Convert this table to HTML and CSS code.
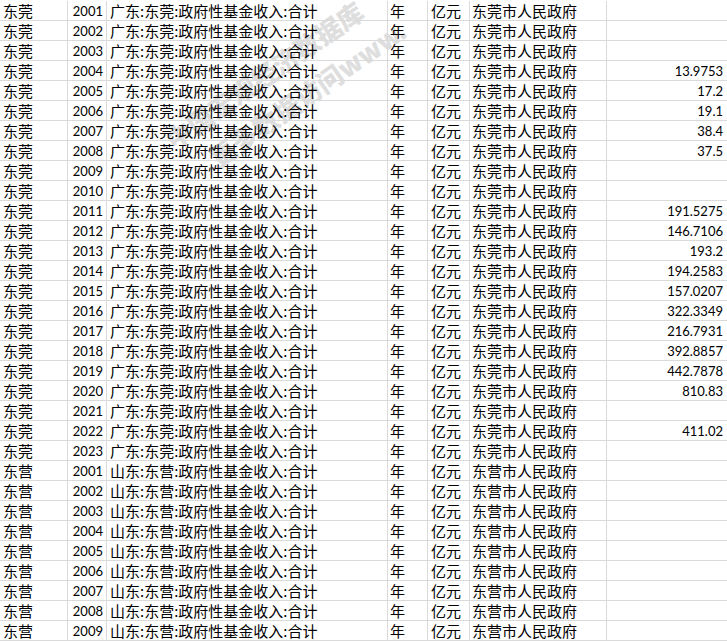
FILE: index.html
```html
<!DOCTYPE html>
<html lang="zh-CN">
<head>
<meta charset="utf-8">
<title>政府性基金收入</title>
<link rel="stylesheet" href="styles.css">
</head>
<body>
<div class="sheet">
  <div class="watermark">
    <div class="wm wm1">中国宏观经济数据库</div>
    <div class="wm wm2">更多数据访问www.</div>
  </div>
  <div class="grid">
    <div class="row"><span class="c city">东莞</span><span class="c yr">2001</span><span class="c nm">广东:东莞:政府性基金收入:合计</span><span class="c u">年</span><span class="c u2">亿元</span><span class="c src">东莞市人民政府</span><span class="c val"></span></div>
    <div class="row"><span class="c city">东莞</span><span class="c yr">2002</span><span class="c nm">广东:东莞:政府性基金收入:合计</span><span class="c u">年</span><span class="c u2">亿元</span><span class="c src">东莞市人民政府</span><span class="c val"></span></div>
    <div class="row"><span class="c city">东莞</span><span class="c yr">2003</span><span class="c nm">广东:东莞:政府性基金收入:合计</span><span class="c u">年</span><span class="c u2">亿元</span><span class="c src">东莞市人民政府</span><span class="c val"></span></div>
    <div class="row"><span class="c city">东莞</span><span class="c yr">2004</span><span class="c nm">广东:东莞:政府性基金收入:合计</span><span class="c u">年</span><span class="c u2">亿元</span><span class="c src">东莞市人民政府</span><span class="c val">13.9753</span></div>
    <div class="row"><span class="c city">东莞</span><span class="c yr">2005</span><span class="c nm">广东:东莞:政府性基金收入:合计</span><span class="c u">年</span><span class="c u2">亿元</span><span class="c src">东莞市人民政府</span><span class="c val">17.2</span></div>
    <div class="row"><span class="c city">东莞</span><span class="c yr">2006</span><span class="c nm">广东:东莞:政府性基金收入:合计</span><span class="c u">年</span><span class="c u2">亿元</span><span class="c src">东莞市人民政府</span><span class="c val">19.1</span></div>
    <div class="row"><span class="c city">东莞</span><span class="c yr">2007</span><span class="c nm">广东:东莞:政府性基金收入:合计</span><span class="c u">年</span><span class="c u2">亿元</span><span class="c src">东莞市人民政府</span><span class="c val">38.4</span></div>
    <div class="row"><span class="c city">东莞</span><span class="c yr">2008</span><span class="c nm">广东:东莞:政府性基金收入:合计</span><span class="c u">年</span><span class="c u2">亿元</span><span class="c src">东莞市人民政府</span><span class="c val">37.5</span></div>
    <div class="row"><span class="c city">东莞</span><span class="c yr">2009</span><span class="c nm">广东:东莞:政府性基金收入:合计</span><span class="c u">年</span><span class="c u2">亿元</span><span class="c src">东莞市人民政府</span><span class="c val"></span></div>
    <div class="row"><span class="c city">东莞</span><span class="c yr">2010</span><span class="c nm">广东:东莞:政府性基金收入:合计</span><span class="c u">年</span><span class="c u2">亿元</span><span class="c src">东莞市人民政府</span><span class="c val"></span></div>
    <div class="row"><span class="c city">东莞</span><span class="c yr">2011</span><span class="c nm">广东:东莞:政府性基金收入:合计</span><span class="c u">年</span><span class="c u2">亿元</span><span class="c src">东莞市人民政府</span><span class="c val">191.5275</span></div>
    <div class="row"><span class="c city">东莞</span><span class="c yr">2012</span><span class="c nm">广东:东莞:政府性基金收入:合计</span><span class="c u">年</span><span class="c u2">亿元</span><span class="c src">东莞市人民政府</span><span class="c val">146.7106</span></div>
    <div class="row"><span class="c city">东莞</span><span class="c yr">2013</span><span class="c nm">广东:东莞:政府性基金收入:合计</span><span class="c u">年</span><span class="c u2">亿元</span><span class="c src">东莞市人民政府</span><span class="c val">193.2</span></div>
    <div class="row"><span class="c city">东莞</span><span class="c yr">2014</span><span class="c nm">广东:东莞:政府性基金收入:合计</span><span class="c u">年</span><span class="c u2">亿元</span><span class="c src">东莞市人民政府</span><span class="c val">194.2583</span></div>
    <div class="row"><span class="c city">东莞</span><span class="c yr">2015</span><span class="c nm">广东:东莞:政府性基金收入:合计</span><span class="c u">年</span><span class="c u2">亿元</span><span class="c src">东莞市人民政府</span><span class="c val">157.0207</span></div>
    <div class="row"><span class="c city">东莞</span><span class="c yr">2016</span><span class="c nm">广东:东莞:政府性基金收入:合计</span><span class="c u">年</span><span class="c u2">亿元</span><span class="c src">东莞市人民政府</span><span class="c val">322.3349</span></div>
    <div class="row"><span class="c city">东莞</span><span class="c yr">2017</span><span class="c nm">广东:东莞:政府性基金收入:合计</span><span class="c u">年</span><span class="c u2">亿元</span><span class="c src">东莞市人民政府</span><span class="c val">216.7931</span></div>
    <div class="row"><span class="c city">东莞</span><span class="c yr">2018</span><span class="c nm">广东:东莞:政府性基金收入:合计</span><span class="c u">年</span><span class="c u2">亿元</span><span class="c src">东莞市人民政府</span><span class="c val">392.8857</span></div>
    <div class="row"><span class="c city">东莞</span><span class="c yr">2019</span><span class="c nm">广东:东莞:政府性基金收入:合计</span><span class="c u">年</span><span class="c u2">亿元</span><span class="c src">东莞市人民政府</span><span class="c val">442.7878</span></div>
    <div class="row"><span class="c city">东莞</span><span class="c yr">2020</span><span class="c nm">广东:东莞:政府性基金收入:合计</span><span class="c u">年</span><span class="c u2">亿元</span><span class="c src">东莞市人民政府</span><span class="c val">810.83</span></div>
    <div class="row"><span class="c city">东莞</span><span class="c yr">2021</span><span class="c nm">广东:东莞:政府性基金收入:合计</span><span class="c u">年</span><span class="c u2">亿元</span><span class="c src">东莞市人民政府</span><span class="c val"></span></div>
    <div class="row"><span class="c city">东莞</span><span class="c yr">2022</span><span class="c nm">广东:东莞:政府性基金收入:合计</span><span class="c u">年</span><span class="c u2">亿元</span><span class="c src">东莞市人民政府</span><span class="c val">411.02</span></div>
    <div class="row"><span class="c city">东莞</span><span class="c yr">2023</span><span class="c nm">广东:东莞:政府性基金收入:合计</span><span class="c u">年</span><span class="c u2">亿元</span><span class="c src">东莞市人民政府</span><span class="c val"></span></div>
    <div class="row"><span class="c city">东营</span><span class="c yr">2001</span><span class="c nm">山东:东营:政府性基金收入:合计</span><span class="c u">年</span><span class="c u2">亿元</span><span class="c src">东营市人民政府</span><span class="c val"></span></div>
    <div class="row"><span class="c city">东营</span><span class="c yr">2002</span><span class="c nm">山东:东营:政府性基金收入:合计</span><span class="c u">年</span><span class="c u2">亿元</span><span class="c src">东营市人民政府</span><span class="c val"></span></div>
    <div class="row"><span class="c city">东营</span><span class="c yr">2003</span><span class="c nm">山东:东营:政府性基金收入:合计</span><span class="c u">年</span><span class="c u2">亿元</span><span class="c src">东营市人民政府</span><span class="c val"></span></div>
    <div class="row"><span class="c city">东营</span><span class="c yr">2004</span><span class="c nm">山东:东营:政府性基金收入:合计</span><span class="c u">年</span><span class="c u2">亿元</span><span class="c src">东营市人民政府</span><span class="c val"></span></div>
    <div class="row"><span class="c city">东营</span><span class="c yr">2005</span><span class="c nm">山东:东营:政府性基金收入:合计</span><span class="c u">年</span><span class="c u2">亿元</span><span class="c src">东营市人民政府</span><span class="c val"></span></div>
    <div class="row"><span class="c city">东营</span><span class="c yr">2006</span><span class="c nm">山东:东营:政府性基金收入:合计</span><span class="c u">年</span><span class="c u2">亿元</span><span class="c src">东营市人民政府</span><span class="c val"></span></div>
    <div class="row"><span class="c city">东营</span><span class="c yr">2007</span><span class="c nm">山东:东营:政府性基金收入:合计</span><span class="c u">年</span><span class="c u2">亿元</span><span class="c src">东营市人民政府</span><span class="c val"></span></div>
    <div class="row"><span class="c city">东营</span><span class="c yr">2008</span><span class="c nm">山东:东营:政府性基金收入:合计</span><span class="c u">年</span><span class="c u2">亿元</span><span class="c src">东营市人民政府</span><span class="c val"></span></div>
    <div class="row"><span class="c city">东营</span><span class="c yr">2009</span><span class="c nm">山东:东营:政府性基金收入:合计</span><span class="c u">年</span><span class="c u2">亿元</span><span class="c src">东营市人民政府</span><span class="c val"></span></div>
  </div>
</div>
</body>
</html>
```

FILE: styles.css
```css
html, body {
  margin: 0;
  padding: 0;
  background: #ffffff;
}

body {
  font-family: "Noto Sans CJK SC", "Noto Sans", sans-serif;
  color: #000000;
  overflow: hidden;
}

.sheet {
  position: relative;
  width: 727px;
  height: 641px;
  padding-top: 1px;
  box-sizing: border-box;
  overflow: hidden;
}

.grid {
  position: relative;
  z-index: 1;
  display: flex;
  flex-direction: column;
}

.row {
  display: grid;
  grid-template-columns: 68px 39px 281px 40px 42px 137px 1fr;
  height: 20px;
  box-sizing: border-box;
  border-bottom: 1px solid #dadada;
}

.c {
  box-sizing: border-box;
  border-right: 1px solid #dadada;
  font-size: 15px;
  line-height: 18px;
  padding-top: 1px;
  white-space: nowrap;
}

.city { padding-left: 3px; }
.nm { padding-left: 3px; }
.u { padding-left: 2px; }
.u2 { padding-left: 3px; }
.src { padding-left: 2px; }

.yr, .val {
  font-family: "Lato", "Liberation Sans", sans-serif;
  font-size: 13px;
  text-align: right;
  padding-right: 3px;
}

.val {
  border-right: none;
  padding-right: 4px;
}

.watermark {
  position: absolute;
  left: 0;
  top: 0;
  width: 727px;
  height: 641px;
  z-index: 0;
  pointer-events: none;
}

.wm {
  position: absolute;
  font-family: "Noto Sans CJK SC", sans-serif;
  font-weight: 900;
  font-size: 26px;
  line-height: 28px;
  color: #dedede;
  white-space: nowrap;
  transform-origin: 0 50%;
  transform: rotate(-35deg);
}

.wm1 {
  left: 168px;
  top: 128px;
}

.wm2 {
  left: 212px;
  top: 146px;
}
```
